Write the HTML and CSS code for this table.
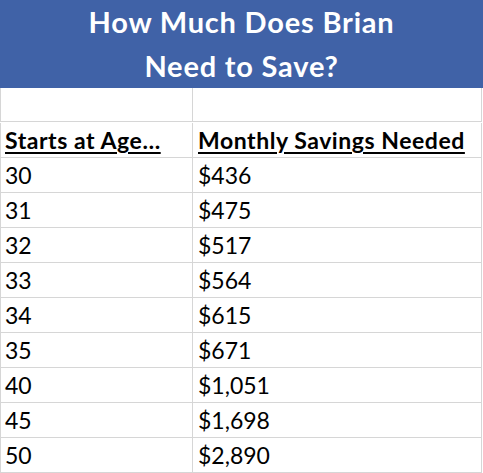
FILE: index.html
```html
<!DOCTYPE html>
<html>
<head>
<meta charset="utf-8">
<link rel="stylesheet" href="styles.css">
</head>
<body>
<div class="sheet">
  <div class="title">How Much Does Brian<br>Need to Save?</div>
  <div class="grid">
    <div class="cell first"></div><div class="cell"></div>
    <div class="cell first head"><span>Starts at Age…</span></div><div class="cell head"><span>Monthly Savings Needed</span></div>
    <div class="cell first">30</div><div class="cell">$436</div>
    <div class="cell first">31</div><div class="cell">$475</div>
    <div class="cell first">32</div><div class="cell">$517</div>
    <div class="cell first">33</div><div class="cell">$564</div>
    <div class="cell first">34</div><div class="cell">$615</div>
    <div class="cell first">35</div><div class="cell">$671</div>
    <div class="cell first">40</div><div class="cell">$1,051</div>
    <div class="cell first">45</div><div class="cell">$1,698</div>
    <div class="cell first">50</div><div class="cell">$2,890</div>
  </div>
</div>
</body>
</html>
```
FILE: styles.css
```css
html, body {
  margin: 0;
  padding: 0;
  background: #ffffff;
}
.sheet {
  width: 483px;
  font-family: Lato, "Open Sans", sans-serif;
}
.title {
  height: 88px;
  background: #4062a7;
  color: #ffffff;
  font-weight: bold;
  font-size: 29px;
  letter-spacing: 0.8px;
  line-height: 44px;
  text-align: center;
}
.grid {
  display: grid;
  grid-template-columns: 193px 289px;
  grid-auto-rows: 35px;
  width: 482px;
}
.cell {
  box-sizing: border-box;
  border-bottom: 1px solid #d6d6d6;
  border-right: 1px solid #d6d6d6;
  font-size: 23px;
  line-height: 34px;
  color: #000;
  padding-left: 5px;
  white-space: nowrap;
}
.grid .cell:nth-child(1), .grid .cell:nth-child(2) {
  height: 34px;
}
.first {
  border-left: 1px solid #d6d6d6;
  padding-left: 4px;
}
.head {
  font-weight: bold;
  letter-spacing: 0.55px;
}
.head span {
  text-decoration: underline;
  text-decoration-thickness: 2px;
  text-underline-offset: 3px;
}
```
